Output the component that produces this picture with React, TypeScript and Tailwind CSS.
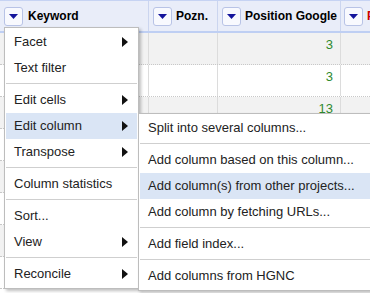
import React from "react";

const rows = ["3", "3", "13", "", "", "", "", ""];

function DropButton() {
    return (
        <div className="w-[19px] h-[19px] shrink-0 rounded-[3px] border border-[#b8c3e6] bg-[#f8f9fe] flex items-center justify-center">
            <svg width="9" height="5" viewBox="0 0 9 5">
                <path d="M0 0H9L4.5 5Z" fill="#14149c" />
            </svg>
        </div>
    );
}

function Arrow() {
    return (
        <svg width="6" height="10" viewBox="0 0 6 10" className="shrink-0">
            <path d="M0 0L6 5L0 10Z" fill="#111" />
        </svg>
    );
}

function Item({ label, sub, active }: { label: string; sub?: boolean; active?: boolean }) {
    return (
        <div className={`h-[26px] flex items-center justify-between pl-[8px] pr-[9px] whitespace-nowrap ${active ? "bg-[#dae5f5]" : ""}`}>
            <span>{label}</span>
            {sub && <Arrow />}
        </div>
    );
}

function Sep() {
    return <div className="h-px bg-[#cfcfcf] mt-[2px] mb-[3px]" />;
}

export default function App() {
    return (
        <div className="relative w-[370px] h-[293px] overflow-hidden bg-white font-['Liberation_Sans',Arial,sans-serif] text-[#222]">
            <div className="flex h-[33px] border-t border-t-[#c6d3f3] border-b-2 border-b-[#bfcff3] bg-[#e9edf9] text-[12px] font-bold text-black">
                <div className="w-[149px] shrink-0 border-r border-[#cbd5ef] flex items-center gap-[5px] pl-[4px]">
                    <DropButton />
                    <span>Keyword</span>
                </div>
                <div className="w-[69px] shrink-0 border-r border-[#cbd5ef] flex items-center gap-[4px] pl-[4px]">
                    <DropButton />
                    <span>Pozn.</span>
                </div>
                <div className="w-[123px] shrink-0 border-r border-[#cbd5ef] flex items-center gap-[4px] pl-[4px]">
                    <DropButton />
                    <span>Position Google</span>
                </div>
                <div className="flex-1 flex items-center gap-[4px] pl-[3px] whitespace-nowrap">
                    <DropButton />
                    <span className="text-[#c00]">Pozice</span>
                </div>
            </div>

            {rows.map((n, i) => (
                <div key={i} className={`flex h-[32px] border-b border-dotted border-[#c8c8c8] text-[13px] ${i % 2 === 0 ? "bg-[#f2f2f2]" : "bg-white"}`}>
                    <div className="w-[149px] shrink-0 border-r border-[#dcdcdc]" />
                    <div className="w-[69px] shrink-0 border-r border-[#dcdcdc]" />
                    <div className="w-[123px] shrink-0 border-r border-[#dcdcdc] text-right pr-[7px] pt-[2px] text-[#2f8a2f]">{n}</div>
                    <div className="flex-1" />
                </div>
            ))}

            <div className="absolute left-[4px] top-[27px] w-[135px] border border-[#bdbdbd] bg-white p-px text-[13px] shadow-[2px_2px_3px_rgba(0,0,0,0.25)]">
                <Item label="Facet" sub />
                <Item label="Text filter" />
                <Sep />
                <Item label="Edit cells" sub />
                <Item label="Edit column" sub active />
                <Item label="Transpose" sub />
                <Sep />
                <Item label="Column statistics" />
                <Sep />
                <Item label="Sort..." />
                <Item label="View" sub />
                <Sep />
                <Item label="Reconcile" sub />
            </div>

            <div className="absolute left-[138px] top-[113px] w-[260px] border border-[#bdbdbd] bg-white p-px text-[13px] shadow-[2px_2px_3px_rgba(0,0,0,0.25)]">
                <Item label="Split into several columns..." />
                <Sep />
                <Item label="Add column based on this column..." />
                <Item label="Add column(s) from other projects..." active />
                <Item label="Add column by fetching URLs..." />
                <Sep />
                <Item label="Add field index..." />
                <Sep />
                <Item label="Add columns from HGNC" />
            </div>
        </div>
    );
}
